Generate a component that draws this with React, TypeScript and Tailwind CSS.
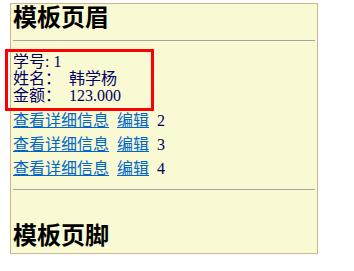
import React from 'react';

const font = { fontFamily: '"Liberation Serif", "Noto Sans CJK SC", serif' };

export default function App() {
  const rows = [2, 3, 4];

  return (
    <div className="relative h-[271px] w-[354px] bg-white pt-[3px] pl-[10px]" style={font}>
      <div className="h-[251px] w-[308px] border border-[#d2b48c] bg-[#f9f9d3] px-[2px] text-[#000066]">
        <h2 className="text-[24px] font-bold leading-[28px] text-black">模板页眉</h2>
        <hr className="mt-[8px] border-0 border-t border-[#a4a4a8]" />

        <div className="mt-[12px] text-[16px] leading-[17px]">
          <div>学号: 1</div>
          <div>姓名：&nbsp;&nbsp;韩学杨</div>
          <div>金额：&nbsp;&nbsp;123.000</div>
        </div>

        <div className="mt-[5px] text-[16px]">
          {rows.map((n) => (
            <div key={n} className="flex h-[24px] items-center gap-[8px] leading-[24px]">
              <a href="#" className="text-[#0066cc] underline">查看详细信息</a>
              <a href="#" className="text-[#0066cc] underline">编辑</a>
              <span>{n}</span>
            </div>
          ))}
        </div>

        <hr className="mt-[8px] border-0 border-t border-[#a4a4a8]" />
        <h2 className="mt-[32px] text-[24px] font-bold leading-[28px] text-black">模板页脚</h2>
      </div>

      {/* red highlight overlay */}
      <div className="absolute left-[5px] top-[49px] h-[62px] w-[149px] border-[3px] border-[#ff0000]" />
    </div>
  );
}
